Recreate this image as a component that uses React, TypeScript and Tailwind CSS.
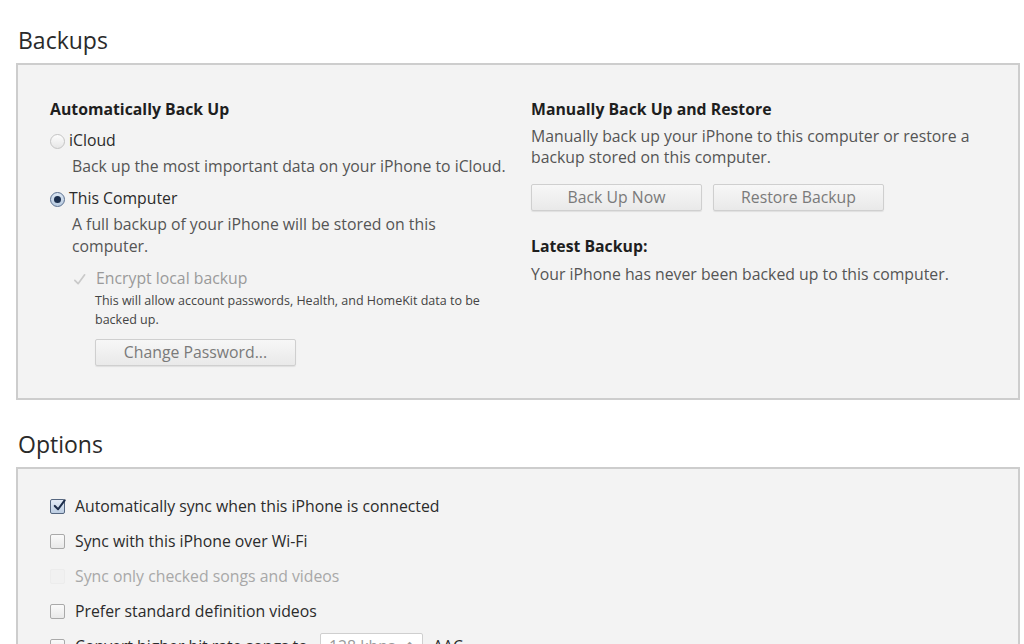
import React from 'react'

const font = { fontFamily: '"Open Sans", "Noto Sans", sans-serif' }

const Radio = ({ checked }: { checked?: boolean }) => (
    <span
        className={`inline-flex h-[15px] w-[15px] shrink-0 items-center justify-center rounded-full border ${
            checked ? 'border-[#5a6f8f] bg-gradient-to-b from-[#dbe6f3] to-[#b9cbe0]' : 'border-[#c4c4c4] bg-gradient-to-b from-[#fdfdfd] to-[#e6e6e6]'
        }`}
    >
        {checked && <span className="h-[7px] w-[7px] rounded-full bg-[#1c2f4d]" />}
    </span>
)

const Checkbox = ({ checked, disabled }: { checked?: boolean; disabled?: boolean }) => (
    <span
        className={`relative inline-flex h-[15px] w-[15px] shrink-0 items-center justify-center rounded-[2px] border ${
            disabled
                ? 'border-[#ececec] bg-[#f1f1f1]'
                : checked
                  ? 'border-[#55667f] bg-gradient-to-b from-[#e3ebf5] to-[#bccde2]'
                  : 'border-[#a9a9a9] bg-gradient-to-b from-[#fafafa] to-[#e9e9e9]'
        }`}
    >
        {checked && (
            <svg viewBox="0 0 16 16" className="absolute -top-[2px] left-[1px] h-[15px] w-[15px]">
                <path d="M3 8.5 L6.5 12 L13.5 2.5" fill="none" stroke="#1d2d4a" strokeWidth="2.2" strokeLinecap="round" strokeLinejoin="round" />
            </svg>
        )}
    </span>
)

const Button = ({ children, className = '' }: { children: React.ReactNode; className?: string }) => (
    <div
        className={`flex h-[27px] items-center justify-center rounded-[2px] border border-[#cfcfcf] bg-gradient-to-b from-[#f7f7f7] to-[#e9e9e9] text-[15.8px] text-[#7a7a7a] shadow-[0_1px_1px_rgba(0,0,0,0.08)] ${className}`}
    >
        {children}
    </div>
)

const OptionRow = ({ checked, disabled, children }: { checked?: boolean; disabled?: boolean; children: React.ReactNode }) => (
    <div className="flex h-[35px] items-center gap-[10px]">
        <Checkbox checked={checked} disabled={disabled} />
        <div className={`flex items-center text-[15.8px] ${disabled ? 'text-[#a8a8a8]' : 'text-[#2b2b2b]'}`}>{children}</div>
    </div>
)

export default function App() {
    return (
        <div className="min-h-screen bg-white pl-4 pr-1 pt-[24px]" style={font}>
            {/* Backups */}
            <h2 className="pl-[2px] text-[23px] leading-[32px] text-[#2a2a2a]">Backups</h2>
            <section className="mt-[7px] grid h-[337px] grid-cols-[481px_1fr] border-2 border-[#cdcdcd] bg-[#f3f3f3] pl-[32px] pt-[33px]">
                <div className="flex flex-col">
                    <h3 className="text-[15.8px] font-bold leading-[22px] text-[#1e1e1e]">Automatically Back Up</h3>

                    <div className="mt-[10px] flex h-[22px] items-center gap-[4px] text-[15.8px] text-[#2b2b2b]">
                        <Radio />
                        <span>iCloud</span>
                    </div>
                    <p className="mt-[3px] pl-[22px] text-[15.8px] leading-[22px] text-[#555]">
                        Back up the most important data on your iPhone to iCloud.
                    </p>

                    <div className="mt-[11px] flex h-[22px] items-center gap-[4px] text-[15.8px] text-[#2b2b2b]">
                        <Radio checked />
                        <span>This Computer</span>
                    </div>
                    <p className="mt-[3px] w-[410px] pl-[22px] text-[15.8px] leading-[22px] text-[#555]">
                        A full backup of your iPhone will be stored on this computer.
                    </p>

                    <div className="mt-[11px] flex h-[22px] items-center gap-[9px] pl-[22px] text-[15.8px] text-[#9a9a9a]">
                        <svg viewBox="0 0 16 16" className="h-[15px] w-[15px]">
                            <path d="M3 9 L6.5 12.5 L13.5 3" fill="none" stroke="#c9c9c9" strokeWidth="1.8" strokeLinecap="round" strokeLinejoin="round" />
                        </svg>
                        <span>Encrypt local backup</span>
                    </div>
                    <p className="mt-[1px] w-[462px] pl-[45px] text-[12.5px] leading-[19px] text-[#444]">
                        This will allow account passwords, Health, and HomeKit data to be backed up.
                    </p>
                    <div className="mt-[10px] pl-[45px]">
                        <Button className="w-[201px]">Change Password...</Button>
                    </div>
                </div>

                <div className="flex flex-col">
                    <h3 className="text-[15.8px] font-bold leading-[22px] text-[#1e1e1e]">Manually Back Up and Restore</h3>
                    <p className="mt-[6px] w-[462px] text-[15.8px] leading-[21px] text-[#555]">
                        Manually back up your iPhone to this computer or restore a backup stored on this computer.
                    </p>
                    <div className="mt-[16px] flex gap-[11px]">
                        <Button className="w-[171px]">Back Up Now</Button>
                        <Button className="w-[171px]">Restore Backup</Button>
                    </div>
                    <h3 className="mt-[24px] text-[15.8px] font-bold leading-[22px] text-[#1e1e1e]">Latest Backup:</h3>
                    <p className="mt-[6px] text-[15.8px] leading-[22px] text-[#555]">
                        Your iPhone has never been backed up to this computer.
                    </p>
                </div>
            </section>

            {/* Options */}
            <h2 className="mt-[28px] pl-[2px] text-[23px] leading-[32px] text-[#2a2a2a]">Options</h2>
            <section className="mt-[7px] border-2 border-b-0 border-[#cdcdcd] bg-[#f3f3f3] pb-6 pl-[32px] pt-[20px]">
                <OptionRow checked>Automatically sync when this iPhone is connected</OptionRow>
                <OptionRow>Sync with this iPhone over Wi-Fi</OptionRow>
                <OptionRow disabled>Sync only checked songs and videos</OptionRow>
                <OptionRow>Prefer standard definition videos</OptionRow>
                <OptionRow>
                    <span className="w-[245px] whitespace-nowrap">Convert higher bit rate songs to</span>
                    <span className="flex h-[27px] w-[103px] items-center justify-between rounded-[2px] border border-[#cfcfcf] bg-white px-[8px] text-[#9a9a9a]">
                        128 kbps <span className="text-[11px]">⬍</span>
                    </span>
                    <span className="ml-[10px]">AAC</span>
                </OptionRow>
            </section>
        </div>
    )
}
